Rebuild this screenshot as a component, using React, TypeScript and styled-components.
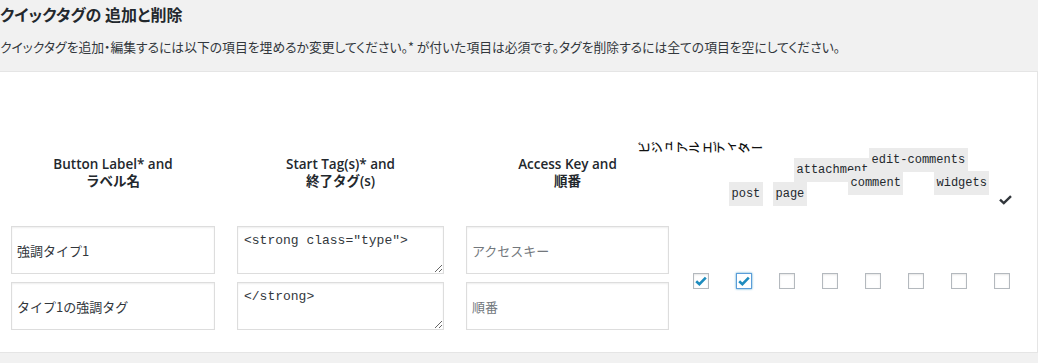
import styled, { createGlobalStyle } from "styled-components";

const GlobalStyle = createGlobalStyle`
    body {
        margin: 0;
        background: #f1f1f1;
        font-family: "Open Sans", "Noto Sans CJK JP", sans-serif;
        color: #32373c;
    }
`;

const Page = styled.div`
    width: 1038px;
    overflow: hidden;
`;

const Title = styled.h2`
    margin: 0;
    font-family: "Noto Sans CJK JP", sans-serif;
    font-feature-settings: "palt";
    font-size: 16px;
    font-weight: 700;
    line-height: 28px;
    color: #23282d;
    white-space: nowrap;
`;

const Intro = styled.p`
    margin: 9px 0 14px;
    font-family: "Noto Sans CJK JP", sans-serif;
    font-feature-settings: "palt";
    font-size: 12.8px;
    line-height: 20px;
    color: #32373c;
    white-space: nowrap;
`;

const Panel = styled.div`
    margin-left: -1px;
    width: 1026px;
    padding: 0 0 22px 11px;
    background: #fff;
    border: 1px solid #e5e5e5;
    box-shadow: 0 1px 1px rgba(0, 0, 0, 0.04);
`;

const Table = styled.div`
    display: grid;
    grid-template-columns: 204px 229px 225px 354px;
    grid-template-rows: 142px auto;
`;

// header of a text column, pushed down to sit above its inputs
const FieldHead = styled.div<{ $inset?: number }>`
    display: flex;
    align-items: flex-end;
    justify-content: center;
    padding-left: ${(p) => p.$inset ?? 0}px;
    padding-bottom: 24px;
    font-size: 13.5px;
    font-weight: 600;
    line-height: 17px;
    text-align: center;
    color: #23282d;
`;

const FieldCol = styled.div<{ $inset?: number }>`
    display: flex;
    flex-direction: column;
    gap: 8px;
    padding-top: 12px;
    padding-left: ${(p) => p.$inset ?? 0}px;
`;

const TextInput = styled.input`
    box-sizing: border-box;
    width: 100%;
    height: 48px;
    margin: 0;
    padding: 0 5px;
    border: 1px solid #ddd;
    box-shadow: inset 0 1px 2px rgba(0, 0, 0, 0.07);
    background: #fff;
    font-family: "Noto Sans CJK JP", sans-serif;
    font-size: 13px;
    color: #32373c;
    outline: none;

    &::placeholder {
        color: #72777c;
    }
`;

const CodeArea = styled.textarea`
    box-sizing: border-box;
    width: 100%;
    height: 48px;
    margin: 0;
    padding: 4px 6px;
    border: 1px solid #ddd;
    box-shadow: inset 0 1px 2px rgba(0, 0, 0, 0.07);
    background: #fff;
    font-family: "Liberation Mono", monospace;
    font-size: 13px;
    line-height: 20px;
    color: #32373c;
    outline: none;
`;

const CheckGroup = styled.div`
    display: grid;
    grid-template-columns: repeat(8, 43px);
    padding-left: 10px;
`;

const CheckHeadCell = styled.div`
    display: flex;
    align-items: flex-end;
    min-width: 0;
`;

const SideHead = styled.div`
    display: flex;
    justify-content: center;
    align-items: flex-end;
    padding-bottom: 60px;
`;

const SideBox = styled.div`
    flex-shrink: 0;
    width: 125px;
    height: 13px;
`;

const SideText = styled.div`
    writing-mode: vertical-rl;
    width: 13px;
    height: 125px;
    line-height: 13px;
    transform-origin: 0 0;
    transform: translateY(13px) rotate(-90deg);
    font-family: "Noto Sans CJK JP", sans-serif;
    font-size: 12.5px;
    font-weight: 500;
    color: #111;
    white-space: nowrap;
`;

const TypeTag = styled.code<{ $shift: number; $lift: number }>`
    flex-shrink: 0;
    margin-left: ${(p) => p.$shift}px;
    margin-bottom: ${(p) => p.$lift}px;
    padding: 3px 2.5px;
    background: #ebebeb;
    font-family: "Liberation Mono", monospace;
    font-size: 12px;
    line-height: 18px;
    color: #23282d;
    white-space: nowrap;
`;

const AllMark = styled.svg`
    flex-shrink: 0;
    margin-left: 19px;
    margin-bottom: 9px;
`;

const CheckRow = styled.div`
    display: grid;
    grid-template-columns: repeat(8, 43px);
    align-items: center;
    justify-items: center;
    padding: 18px 0 0 10px;
`;

const Box = styled.span<{ $focus?: boolean }>`
    display: flex;
    align-items: center;
    justify-content: center;
    box-sizing: border-box;
    width: 16px;
    height: 16px;
    border: 1px solid ${(p) => (p.$focus ? "#5b9dd9" : "#b4b9be")};
    background: #fff;
    box-shadow: ${(p) =>
        p.$focus ? "0 0 2px rgba(30, 140, 190, 0.8)" : "inset 0 1px 2px rgba(0, 0, 0, 0.1)"};
`;

const tags = [
    { name: "post", shift: 7, lift: 8 },
    { name: "page", shift: 8, lift: 8 },
    { name: "attachment", shift: -14, lift: 32 },
    { name: "comment", shift: -3, lift: 19 },
    { name: "edit-comments", shift: -25, lift: 42 },
    { name: "widgets", shift: -3, lift: 19 },
];

const checks = [true, true, false, false, false, false, false, false];

const Tick = () => (
    <svg width="12" height="10" viewBox="0 0 12 10">
        <path d="M1.2 5.2 L4.4 8.2 L10.8 1.6" fill="none" stroke="#1e8cbe" strokeWidth="2.6" />
    </svg>
);

export default function App() {
    return (
        <Page>
            <GlobalStyle />
            <Title>クイックタグの 追加と削除</Title>
            <Intro>
                クイックタグを追加・編集するには以下の項目を埋めるか変更してください。* が付いた項目は必須です。タグを削除するには全ての項目を空にしてください。
            </Intro>
            <Panel>
                <Table>
                    <FieldHead>
                        Button Label* and
                        <br />
                        ラベル名
                    </FieldHead>
                    <FieldHead $inset={22}>
                        Start Tag(s)* and
                        <br />
                        終了タグ(s)
                    </FieldHead>
                    <FieldHead $inset={22}>
                        Access Key and
                        <br />
                        順番
                    </FieldHead>
                    <CheckGroup>
                        <SideHead>
                            <SideBox>
                                <SideText>ビジュアルエディター</SideText>
                            </SideBox>
                        </SideHead>
                        {tags.map((t) => (
                            <CheckHeadCell key={t.name}>
                                <TypeTag $shift={t.shift} $lift={t.lift}>
                                    {t.name}
                                </TypeTag>
                            </CheckHeadCell>
                        ))}
                        <CheckHeadCell>
                            <AllMark width="13" height="10" viewBox="0 0 13 10">
                                <path d="M1 4.6 L4.8 8.2 L12 1.2" fill="none" stroke="#32373c" strokeWidth="2.4" />
                            </AllMark>
                        </CheckHeadCell>
                    </CheckGroup>

                    <FieldCol>
                        <TextInput defaultValue="強調タイプ1" />
                        <TextInput defaultValue="タイプ1の強調タグ" />
                    </FieldCol>
                    <FieldCol $inset={22}>
                        <CodeArea defaultValue={'<strong class="type">'} />
                        <CodeArea defaultValue="</strong>" />
                    </FieldCol>
                    <FieldCol $inset={22}>
                        <TextInput placeholder="アクセスキー" />
                        <TextInput placeholder="順番" />
                    </FieldCol>
                    <CheckRow>
                        {checks.map((on, i) => (
                            <Box key={i} $focus={i === 1}>
                                {on && <Tick />}
                            </Box>
                        ))}
                    </CheckRow>
                </Table>
            </Panel>
        </Page>
    );
}
